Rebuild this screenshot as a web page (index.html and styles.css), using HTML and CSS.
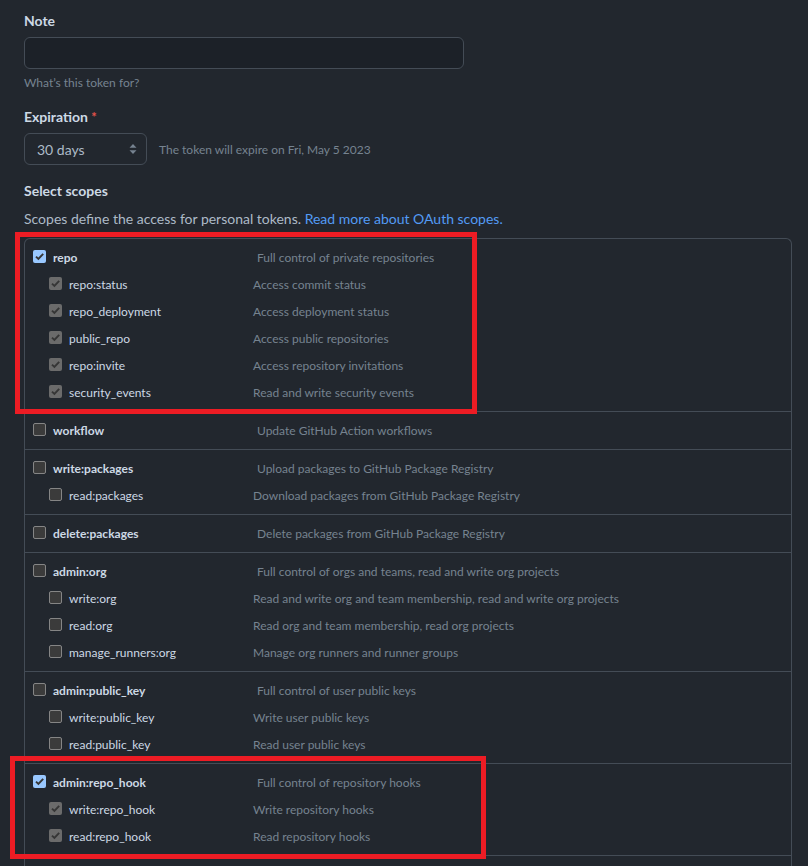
FILE: index.html
```html
<!DOCTYPE html>
<html lang="en">
<head>
<meta charset="utf-8">
<title>New personal access token</title>
<link rel="stylesheet" href="styles.css">
</head>
<body>
<div class="page">
  <label class="label first">Note</label>
  <div class="input"></div>
  <p class="note">What’s this token for?</p>

  <label class="label exp">Expiration <span class="req">*</span></label>
  <div class="exp-row">
    <div class="select">30 days
      <svg class="arrows" width="8" height="12" viewBox="0 0 8 12"><path d="M4 1 L7.5 4.8 H0.5 Z M4 11 L7.5 7.2 H0.5 Z" fill="#768390"/></svg>
    </div>
    <span class="exp-note">The token will expire on Fri, May 5 2023</span>
  </div>

  <h3 class="label scopes-title">Select scopes</h3>
  <p class="lead">Scopes define the access for personal tokens. <a href="#" class="link">Read more about OAuth scopes.</a></p>

  <div class="scopes">
    <div class="group">
      <div class="row top"><span class="name"><span class="cb on"></span>repo</span><span class="sdesc">Full control of private repositories</span></div>
      <div class="row sub"><span class="name"><span class="cb dis"></span>repo:status</span><span class="sdesc">Access commit status</span></div>
      <div class="row sub"><span class="name"><span class="cb dis"></span>repo_deployment</span><span class="sdesc">Access deployment status</span></div>
      <div class="row sub"><span class="name"><span class="cb dis"></span>public_repo</span><span class="sdesc">Access public repositories</span></div>
      <div class="row sub"><span class="name"><span class="cb dis"></span>repo:invite</span><span class="sdesc">Access repository invitations</span></div>
      <div class="row sub"><span class="name"><span class="cb dis"></span>security_events</span><span class="sdesc">Read and write security events</span></div>
    </div>
    <div class="group">
      <div class="row top"><span class="name"><span class="cb"></span>workflow</span><span class="sdesc">Update GitHub Action workflows</span></div>
    </div>
    <div class="group">
      <div class="row top"><span class="name"><span class="cb"></span>write:packages</span><span class="sdesc">Upload packages to GitHub Package Registry</span></div>
      <div class="row sub"><span class="name"><span class="cb"></span>read:packages</span><span class="sdesc">Download packages from GitHub Package Registry</span></div>
    </div>
    <div class="group">
      <div class="row top"><span class="name"><span class="cb"></span>delete:packages</span><span class="sdesc">Delete packages from GitHub Package Registry</span></div>
    </div>
    <div class="group">
      <div class="row top"><span class="name"><span class="cb"></span>admin:org</span><span class="sdesc">Full control of orgs and teams, read and write org projects</span></div>
      <div class="row sub"><span class="name"><span class="cb"></span>write:org</span><span class="sdesc">Read and write org and team membership, read and write org projects</span></div>
      <div class="row sub"><span class="name"><span class="cb"></span>read:org</span><span class="sdesc">Read org and team membership, read org projects</span></div>
      <div class="row sub"><span class="name"><span class="cb"></span>manage_runners:org</span><span class="sdesc">Manage org runners and runner groups</span></div>
    </div>
    <div class="group">
      <div class="row top"><span class="name"><span class="cb"></span>admin:public_key</span><span class="sdesc">Full control of user public keys</span></div>
      <div class="row sub"><span class="name"><span class="cb"></span>write:public_key</span><span class="sdesc">Write user public keys</span></div>
      <div class="row sub"><span class="name"><span class="cb"></span>read:public_key</span><span class="sdesc">Read user public keys</span></div>
    </div>
    <div class="group last">
      <div class="row top"><span class="name"><span class="cb on"></span>admin:repo_hook</span><span class="sdesc">Full control of repository hooks</span></div>
      <div class="row sub"><span class="name"><span class="cb dis"></span>write:repo_hook</span><span class="sdesc">Write repository hooks</span></div>
      <div class="row sub"><span class="name"><span class="cb dis"></span>read:repo_hook</span><span class="sdesc">Read repository hooks</span></div>
    </div>
  </div>

  <div class="mark mark-repo"></div>
  <div class="mark mark-hook"></div>
</div>
</body>
</html>
```

FILE: styles.css
```css
html, body {
  margin: 0;
  background: #22272e;
}
body {
  font-family: Lato, "Noto Sans", sans-serif;
  color: #adbac7;
  font-size: 14px;
}
.page {
  position: relative;
  padding: 0 16px 0 24px;
}
.label {
  display: block;
  font-size: 14px;
  font-weight: 700;
  line-height: 21px;
  color: #cdd9e5;
  margin: 0;
}
.label.first { padding-top: 10px; }
.input {
  margin-top: 6px;
  width: 440px;
  height: 32px;
  box-sizing: border-box;
  background: #1c2128;
  border: 1px solid #444c56;
  border-radius: 6px;
}
.note {
  margin: 5px 0 0;
  font-size: 12px;
  line-height: 18px;
  color: #768390;
}
.label.exp { margin-top: 14px; }
.req { color: #e5534b; font-size: 13px; }
.exp-row {
  margin-top: 5px;
  display: flex;
  align-items: center;
}
.select {
  position: relative;
  width: 123px;
  height: 32px;
  box-sizing: border-box;
  border: 1px solid #444c56;
  border-radius: 6px;
  padding-left: 12px;
  display: flex;
  align-items: center;
  font-size: 14px;
  color: #adbac7;
}
.arrows {
  position: absolute;
  right: 9px;
  top: 9px;
}
.exp-note {
  margin-left: 12px;
  font-size: 12px;
  color: #768390;
}
.scopes-title { margin-top: 15px; }
.lead {
  margin: 7px 0 0;
  font-size: 14px;
  line-height: 21px;
  color: #adbac7;
}
.link { color: #539bf5; text-decoration: none; }
.scopes {
  margin-top: 9px;
  width: 768px;
  box-sizing: border-box;
  border: 1px solid #444c56;
  border-bottom: 0;
  border-radius: 6px 6px 0 0;
  padding-bottom: 24px;
}
.group {
  border-top: 1px solid #444c56;
  padding: 8px 0;
}
.group:first-child { border-top: 0; }
.group.last { border-bottom: 1px solid #444c56; }
.row {
  display: grid;
  grid-template-columns: 224px 1fr;
  align-items: center;
  height: 21px;
  padding-left: 8px;
  font-size: 12px;
}
.row.sub {
  grid-template-columns: 204px 1fr;
  padding-left: 24px;
  margin-top: 6px;
}
.name {
  display: flex;
  align-items: center;
  color: #cdd9e5;
}
.top .name { font-weight: 700; }
.sdesc { color: #768390; white-space: nowrap; }
.cb {
  flex-shrink: 0;
  width: 13px;
  height: 13px;
  box-sizing: border-box;
  margin-right: 7px;
  margin-bottom: 2px;
  border-radius: 2px;
  background: #3b3b3b;
  border: 1px solid #858585;
}
.sub .cb { margin-bottom: 3px; }
.cb.on, .cb.dis {
  border: 0;
  background-repeat: no-repeat;
  background-position: center;
  background-image: url("data:image/svg+xml,%3Csvg xmlns='http://www.w3.org/2000/svg' width='13' height='13' viewBox='0 0 13 13'%3E%3Cpath d='M3 6.6 L5.4 9 L10.2 3.8' fill='none' stroke='%23363636' stroke-width='1.9'/%3E%3C/svg%3E");
}
.cb.on { background-color: #99c8ff; }
.cb.dis { background-color: #6b6b6b; }
.mark {
  position: absolute;
  border: 5px solid #ed1c24;
  box-sizing: border-box;
}
.mark-repo { left: 15px; top: 232px; width: 462px; height: 182px; }
.mark-hook { left: 10px; top: 756px; width: 476px; height: 103px; }
```
